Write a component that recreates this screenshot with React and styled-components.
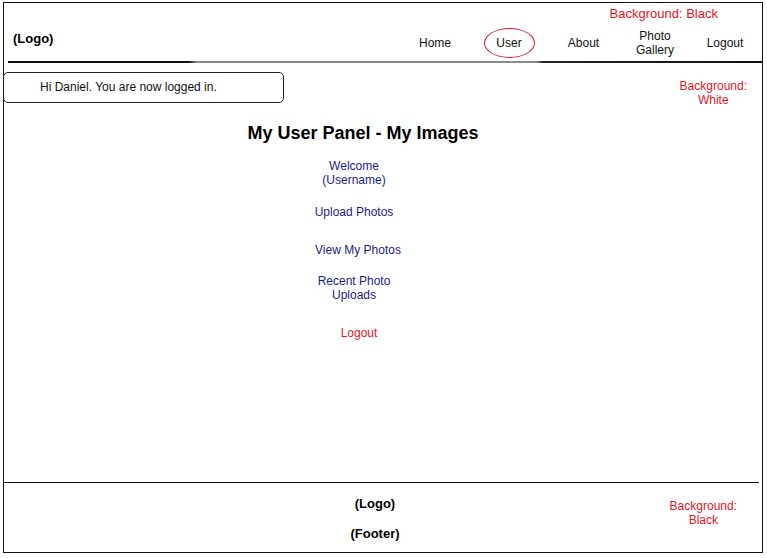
import styled, { createGlobalStyle } from 'styled-components';

const GlobalStyle = createGlobalStyle`
  html, body {
    margin: 0;
    padding: 0;
    background: #fff;
  }
  body {
    font-family: "Liberation Sans", Arial, sans-serif;
    color: #000;
  }
`;

const navItems = [
  { label: 'Home', width: 74 },
  { label: 'User', width: 74, active: true },
  { label: 'About', width: 75 },
  { label: 'Photo Gallery', width: 68 },
  { label: 'Logout', width: 72 },
];

const panelLinks = [
  { label: 'Welcome\n(Username)', top: 15, nudge: 0 },
  { label: 'Upload Photos', top: 18 },
  { label: 'View My Photos', top: 24, nudge: 8 },
  { label: 'Recent Photo\nUploads', top: 17 },
  { label: 'Logout', top: 24, nudge: 10, warn: true },
];

export default function App() {
  return (
    <>
      <GlobalStyle />
      <Frame>
        <Header>
          <Logo>(Logo)</Logo>
          <HeaderRight>
            <Note $size={13}>Background: Black</Note>
            <Nav>
              {navItems.map((item) => (
                <NavItem key={item.label} $width={item.width}>
                  {item.active ? <Circled>{item.label}</Circled> : item.label}
                </NavItem>
              ))}
            </Nav>
          </HeaderRight>
        </Header>
        <HeaderRule />
        <Body>
          <TopRow>
            <LoginBox>Hi Daniel. You are now logged in.</LoginBox>
            <SideNote>
              Background:
              <br />
              White
            </SideNote>
          </TopRow>
          <Panel>
            <Title>My User Panel - My Images</Title>
            <LinkList>
              {panelLinks.map((link) => (
                <PanelLink
                  key={link.label}
                  $top={link.top}
                  $nudge={link.nudge || 0}
                  $warn={link.warn}
                >
                  {link.label}
                </PanelLink>
              ))}
            </LinkList>
          </Panel>
        </Body>
        <FooterRule />
        <Footer>
          <FooterCenter>
            <FooterText>(Logo)</FooterText>
            <FooterText>(Footer)</FooterText>
          </FooterCenter>
          <FooterNote>
            Background:
            <br />
            Black
          </FooterNote>
        </Footer>
      </Frame>
    </>
  );
}

const Frame = styled.div`
  box-sizing: border-box;
  margin: 2px 0 0 3px;
  width: 760px;
  height: 551px;
  border: 1px solid #111;
  display: flex;
  flex-direction: column;
`;

const Header = styled.header`
  height: 58px;
  display: flex;
  justify-content: space-between;
`;

const Logo = styled.div`
  font-weight: bold;
  font-size: 13px;
  padding: 28px 0 0 9px;
`;

const HeaderRight = styled.div`
  display: flex;
  flex-direction: column;
  align-items: flex-end;
`;

const Note = styled.div`
  color: #e8141c;
  font-size: ${(p) => p.$size}px;
  line-height: 15px;
  margin: 3px 44px 0 0;
`;

const Nav = styled.nav`
  display: flex;
  margin-top: 5px;
  margin-right: 1px;
`;

const NavItem = styled.div`
  width: ${(p) => p.$width}px;
  height: 34px;
  display: flex;
  align-items: center;
  justify-content: center;
  text-align: center;
  font-size: 12px;
  line-height: 14px;
  color: #111;
`;

const Circled = styled.span`
  box-sizing: border-box;
  width: 51px;
  height: 30px;
  border: 1px solid #d81a2a;
  border-radius: 50%;
  display: flex;
  align-items: center;
  justify-content: center;
`;

const HeaderRule = styled.div`
  height: 2px;
  margin-left: 4px;
  background: linear-gradient(
    to right,
    #111 0%,
    #111 24%,
    #8a8a8a 25%,
    #8a8a8a 70%,
    #222 71%,
    #111 100%
  );
`;

const Body = styled.main`
  flex: 1;
  display: flex;
  flex-direction: column;
`;

const TopRow = styled.div`
  display: flex;
  justify-content: space-between;
  margin-top: 9px;
`;

const LoginBox = styled.div`
  box-sizing: border-box;
  width: 281px;
  height: 31px;
  margin-left: -1px;
  border: 1px solid #222;
  border-radius: 5px;
  font-size: 12px;
  line-height: 29px;
  padding-left: 36px;
  color: #111;
`;

const SideNote = styled.div`
  color: #e8141c;
  font-size: 12px;
  line-height: 14px;
  text-align: center;
  margin: 7px 15px 0 0;
`;

const Panel = styled.section`
  display: flex;
  flex-direction: column;
  padding-left: 243px;
`;

const Title = styled.h1`
  margin: 16px 0 0;
  width: 232px;
  text-align: center;
  font-size: 18px;
  line-height: 21px;
  font-weight: bold;
`;

const LinkList = styled.div`
  width: 214px;
  display: flex;
  flex-direction: column;
  align-items: center;
`;

const PanelLink = styled.div`
  margin-top: ${(p) => p.$top}px;
  padding-left: ${(p) => p.$nudge}px;
  white-space: pre-line;
  text-align: center;
  font-size: 12px;
  line-height: 14px;
  color: ${(p) => (p.$warn ? '#e8141c' : '#1c1c86')};
`;

const FooterRule = styled.div`
  height: 1px;
  margin-right: 3px;
  background: #111;
`;

const Footer = styled.footer`
  height: 69px;
  display: grid;
  grid-template-columns: 1fr auto;
  align-items: start;
`;

const FooterCenter = styled.div`
  display: flex;
  flex-direction: column;
  align-items: center;
  gap: 15px;
  padding: 13px 0 0 243px;
  width: 256px;
`;

const FooterText = styled.div`
  font-weight: bold;
  font-size: 13px;
  line-height: 15px;
`;

const FooterNote = styled.div`
  color: #e8141c;
  font-size: 12px;
  line-height: 14px;
  text-align: center;
  margin: 16px 25px 0 0;
`;
